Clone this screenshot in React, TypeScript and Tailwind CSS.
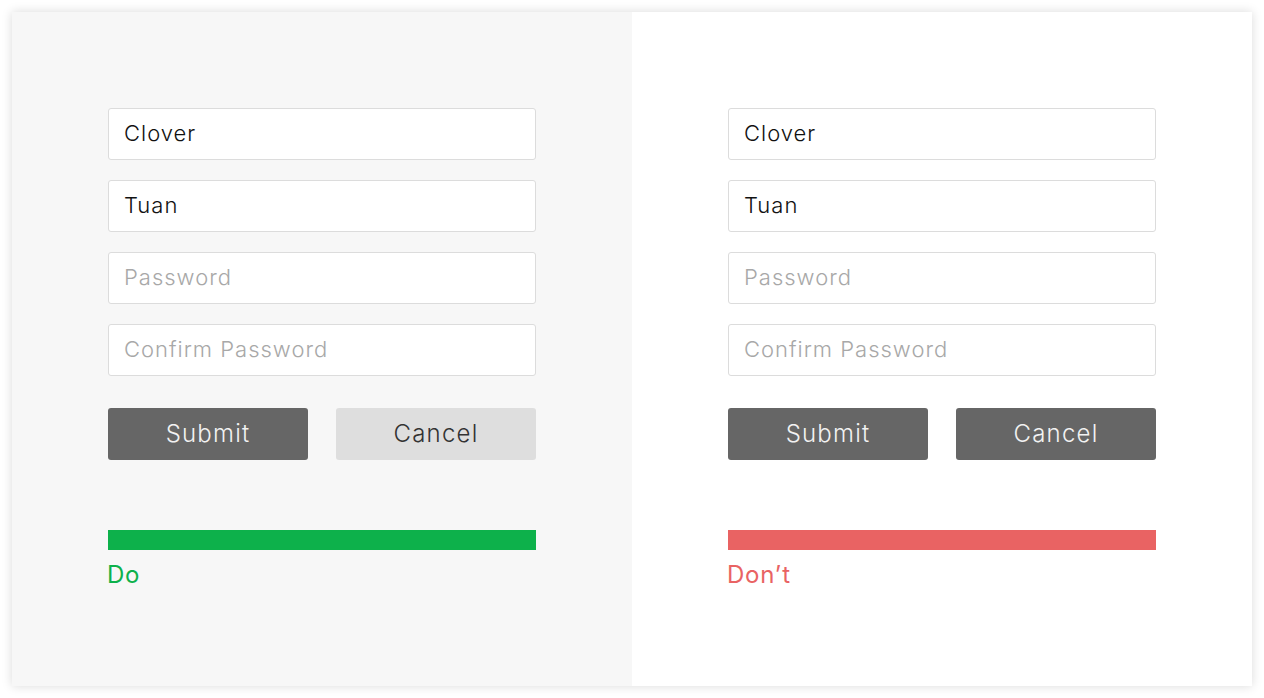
import React from "react";

const font = { fontFamily: 'Inter, "Noto Sans", sans-serif' };

function Input({ value, placeholder }: { value?: string; placeholder?: string }) {
  return (
    <div className="h-[52px] w-[428px] rounded-[3px] border border-[#dcdcdc] bg-white flex items-center px-[15px] pb-[1px]">
      {value ? (
        <span className="text-[22px] tracking-[1px] text-[#111] font-light">{value}</span>
      ) : (
        <span className="text-[22px] tracking-[1px] text-[#a8a8a8] font-light">{placeholder}</span>
      )}
    </div>
  );
}

function Panel({ good }: { good: boolean }) {
  return (
    <div className={`flex-1 pt-[96px] pl-[96px] ${good ? "bg-[#f7f7f7]" : "bg-white"}`}>
      <div className="flex flex-col gap-[20px] w-[428px]">
        <Input value="Clover" />
        <Input value="Tuan" />
        <Input placeholder="Password" />
        <Input placeholder="Confirm Password" />
      </div>
      <div className="mt-[32px] flex gap-[28px]">
        <div className="h-[52px] w-[200px] rounded-[3px] bg-[#666666] flex items-center justify-center text-[24px] tracking-[1.2px] font-light text-[#f2f2f2]">
          Submit
        </div>
        <div
          className={`h-[52px] w-[200px] rounded-[3px] flex items-center justify-center text-[24px] tracking-[1.2px] font-light ${
            good ? "bg-[#dedede] text-[#333]" : "bg-[#666666] text-[#f2f2f2]"
          }`}
        >
          Cancel
        </div>
      </div>
      <div className={`mt-[70px] h-[20px] w-[428px] ${good ? "bg-[#0db14b]" : "bg-[#e96363]"}`} />
      <div
        className={`mt-[8px] -ml-[1px] text-[24px] tracking-[0.8px] leading-[34px] ${good ? "text-[#0db14b]" : "text-[#e96363]"}`}
      >
        {good ? "Do" : "Don’t"}
      </div>
    </div>
  );
}

export default function App() {
  return (
    <div className="w-[1264px] h-[698px] bg-white p-[12px]" style={font}>
      <div className="flex h-[674px] w-[1240px] shadow-[0_0_10px_rgba(0,0,0,0.15)]">
        <Panel good />
        <Panel good={false} />
      </div>
    </div>
  );
}
